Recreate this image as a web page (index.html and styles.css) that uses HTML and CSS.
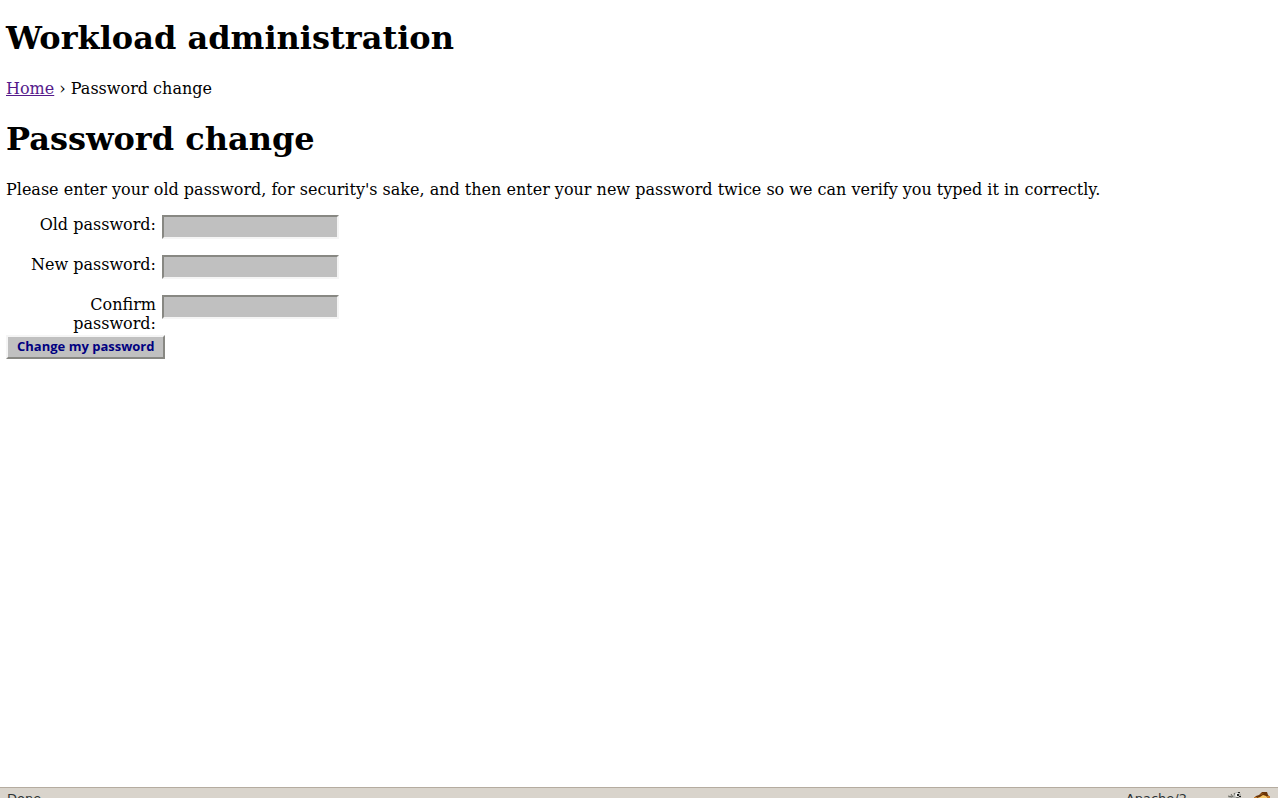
FILE: index.html
```html
<!DOCTYPE html>
<html lang="en">
<head>
<meta charset="utf-8">
<title>Password change</title>
<link rel="stylesheet" href="styles.css">
</head>
<body class="page">
<main class="content">
  <h1 class="title">Workload administration</h1>
  <nav class="crumbs"><a class="crumb-link" href="#">Home</a> › Password change</nav>
  <h1 class="title">Password change</h1>
  <p class="intro">Please enter your old password, for security's sake, and then enter your new password twice so we can verify you typed it in correctly.</p>
  <form class="form">
    <div class="row"><label class="label" for="old">Old password:</label><input class="field" id="old" type="password"></div>
    <div class="row"><label class="label" for="new">New password:</label><input class="field" id="new" type="password"></div>
    <div class="row"><label class="label" for="confirm">Confirm password:</label><input class="field" id="confirm" type="password"></div>
    <button class="submit" type="submit">Change my password</button>
  </form>
</main>
<footer class="status">
  <span class="status-text">Done</span>
  <span class="server">Apache/2</span>
  <svg class="icon" width="16" height="16" viewBox="0 0 16 16" aria-hidden="true">
    <path d="M1 5l3-2 2 1 1-3 4-1 3 2v4l-2 3 1 5H3l1-6z" fill="#b4b4ae"/>
    <path d="M1 4l4 1M4 2l2 3M9 5l3 1M6 6l-2 4M7 1l2 3" stroke="#66665f" fill="none"/>
    <circle cx="10" cy="3" r="2" fill="#f4f4f0"/>
    <path d="M10 2h2v2h-2zM11 0h2v1h-2zM12 4h2v1h-2z" fill="#222"/>
  </svg>
  <svg class="icon monkey" width="18" height="16" viewBox="0 0 18 16" aria-hidden="true">
    <path d="M1 6l2-2 3-1 3-3h5l1 3 2 2v5l-3 5H5l-4-5z" fill="#6b3508"/>
    <path d="M4 6l3-1 3-2 3 1 2 2v5l-3 3H7l-3-3z" fill="#f5c565"/>
    <path d="M1 5h3v3H1zM14 4h3v3h-3z" fill="#c47a28"/>
    <path d="M7 2l4-1-3 2z" fill="#a8641c"/>
  </svg>
</footer>
</body>
</html>
```
FILE: styles.css
```css
* { box-sizing: border-box; }
.page {
  margin: 0;
  height: 100vh;
  display: flex;
  flex-direction: column;
  overflow: hidden;
  background: #fff;
  color: #000;
  font: 16px/19px "DejaVu Serif", serif;
}
.content {
  flex: 1;
  padding: 19px 6px 0;
}
.title {
  margin: 0 0 22px;
  font-size: 32px;
  line-height: 38px;
}
.crumbs { margin-bottom: 22px; }
.crumb-link { color: #551a8b; }
.intro { margin: 0 0 16px; }
.form {
  display: flex;
  flex-direction: column;
  align-items: flex-start;
}
.row {
  display: flex;
  align-items: flex-start;
  gap: 6px;
  min-height: 40px;
}
.label {
  width: 150px;
  text-align: right;
}
.field {
  width: 177px;
  height: 24px;
  padding: 1px 2px;
  border: 2px solid;
  border-color: #888883 #f5f5f5 #f5f5f5 #888883;
  background: #c0c0c0;
  font: 14px "DejaVu Sans", sans-serif;
}
.submit {
  height: 24px;
  padding: 0 9px 2px;
  border: 2px solid;
  border-color: #f5f5f5 #888883 #888883 #f5f5f5;
  background: #c0c0c0;
  color: #000080;
  font: bold 13px "Open Sans", sans-serif;
}
.status {
  display: flex;
  align-items: flex-start;
  height: 11px;
  padding: 3px 7px 0;
  border-top: 1px solid #b5aca0;
  background: #d9d4cc;
  color: #2e3436;
  font: 13px/16px "DejaVu Sans", sans-serif;
}
.server {
  margin-left: auto;
  margin-right: 40px;
}
.icon {
  flex: none;
  margin-top: 1px;
}
.monkey { margin-left: 10px; }
```
